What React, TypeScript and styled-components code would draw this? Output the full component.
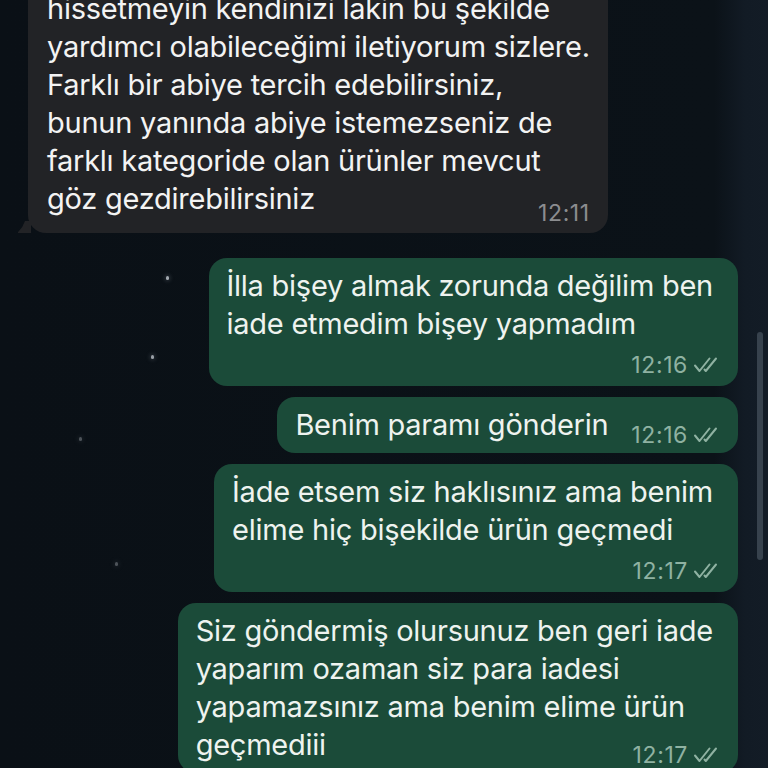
import React from 'react';
import styled, { createGlobalStyle } from 'styled-components';

const GlobalStyle = createGlobalStyle`
  html, body {
    margin: 0;
    padding: 0;
    background: #0b1117;
  }
  body {
    font-family: Inter, "Noto Sans", sans-serif;
    -webkit-font-smoothing: antialiased;
  }
`;

interface Message {
  id: number;
  out: boolean;
  time: string;
  inline: boolean;
  lines: string[];
}

const messages: Message[] = [
  {
    id: 1,
    out: false,
    time: '12:11',
    inline: true,
    lines: [
      'hissetmeyin kendinizi lakin bu şekilde',
      'yardımcı olabileceğimi iletiyorum sizlere.',
      'Farklı bir abiye tercih edebilirsiniz,',
      'bunun yanında abiye istemezseniz de',
      'farklı kategoride olan ürünler mevcut',
      'göz gezdirebilirsiniz',
    ],
  },
  {
    id: 2,
    out: true,
    time: '12:16',
    inline: false,
    lines: ['İlla bişey almak zorunda değilim ben', 'iade etmedim bişey yapmadım'],
  },
  { id: 3, out: true, time: '12:16', inline: true, lines: ['Benim paramı gönderin'] },
  {
    id: 4,
    out: true,
    time: '12:17',
    inline: false,
    lines: ['İade etsem siz haklısınız ama benim', 'elime hiç bişekilde ürün geçmedi'],
  },
  {
    id: 5,
    out: true,
    time: '12:17',
    inline: true,
    lines: [
      'Siz göndermiş olursunuz ben geri iade',
      'yaparım ozaman siz para iadesi',
      'yapamazsınız ama benim elime ürün',
      'geçmediii',
    ],
  },
];

// wallpaper specks, place on the canvas is the content
const stars = [
  { x: 166, y: 276, o: 0.8 },
  { x: 151, y: 355, o: 0.75 },
  { x: 79, y: 437, o: 0.35 },
  { x: 115, y: 562, o: 0.35 },
];

const Screen = styled.div`
  position: relative;
  width: 768px;
  height: 768px;
  overflow: hidden;
  background: linear-gradient(90deg, #0a1016 0%, #0b1218 93%, #121b25 97%, #131c26 100%);
`;

const Star = styled.span<{ $o: number }>`
  position: absolute;
  width: 3px;
  height: 4px;
  border-radius: 2px;
  background: #c9cfd6;
  opacity: ${p => p.$o};
  box-shadow: 0 0 4px 1px rgba(160, 170, 180, 0.35);
`;

const Feed = styled.div`
  display: flex;
  flex-direction: column;
  gap: 11px;
  padding: 0 30px 0 28px;
  margin-top: -19px;
`;

const Row = styled.div<{ $out: boolean; $turn: boolean }>`
  display: flex;
  justify-content: ${p => (p.$out ? 'flex-end' : 'flex-start')};
  margin-top: ${p => (p.$turn ? '14px' : '0')};
`;

const Bubble = styled.div<{ $out: boolean }>`
  position: relative;
  display: flex;
  flex-direction: column;
  padding: ${p => (p.$out ? '9px 25px 9px 18px' : '9px 18px 15px 19px')};
  border-radius: 18px;
  background: ${p => (p.$out ? '#1b4b39' : '#222326')};
  color: ${p => (p.$out ? '#eef3ef' : '#f3f3f3')};
  font-size: 29px;
  line-height: 38px;
  letter-spacing: -0.25px;
`;

const Line = styled.div`
  white-space: nowrap;
`;

const LastRow = styled.div`
  display: flex;
  align-items: flex-end;
  gap: 23px;
  white-space: nowrap;
`;

const Meta = styled.div<{ $out: boolean; $inline: boolean }>`
  display: flex;
  align-items: center;
  gap: 5px;
  height: 24px;
  margin-left: auto;
  margin-right: ${p => (p.$out ? '-7px' : '0')};
  margin-top: ${p => (p.$inline ? '0' : '10px')};
  margin-bottom: ${p => (p.$inline ? (p.$out ? '-3px' : '-7px') : '0')};
  font-size: 23px;
  line-height: 24px;
  letter-spacing: 0.6px;
  color: ${p => (p.$out ? '#8fb2a2' : '#8c8d90')};
`;

const Tail = styled.svg`
  position: absolute;
  left: -11px;
  bottom: 0;
`;

const ScrollThumb = styled.div`
  position: absolute;
  right: 5px;
  top: 332px;
  width: 6px;
  height: 228px;
  border-radius: 3px;
  background: #37424d;
`;

const Ticks = () => (
  <svg width="27" height="16" viewBox="0 0 27 16" fill="none">
    <path d="M2 8.5 L6.5 14 L16.5 1.5" stroke="currentColor" strokeWidth="2" strokeLinecap="round" strokeLinejoin="round" />
    <path d="M11.5 12.5 L12.8 14 L23 1.5" stroke="currentColor" strokeWidth="2" strokeLinecap="round" strokeLinejoin="round" />
  </svg>
);

const MetaBox = ({ m }: { m: Message }) => (
  <Meta $out={m.out} $inline={m.inline}>
    <span>{m.time}</span>
    {m.out && <Ticks />}
  </Meta>
);

const MessageBubble = ({ m }: { m: Message }) => {
  const head = m.lines.slice(0, -1);
  const last = m.lines[m.lines.length - 1];

  return (
    <Bubble $out={m.out}>
      {!m.out && (
        <Tail width="14" height="12" viewBox="0 0 14 12">
          <path d="M14 0 L14 12 L2 12 Q0 12 1.5 10.5 Q6 6 8 0 Z" fill="#222326" />
        </Tail>
      )}
      {head.map((l, i) => (
        <Line key={i}>{l}</Line>
      ))}
      {m.inline ? (
        <LastRow>
          <span>{last}</span>
          <MetaBox m={m} />
        </LastRow>
      ) : (
        <>
          <Line>{last}</Line>
          <MetaBox m={m} />
        </>
      )}
    </Bubble>
  );
};

export default function App() {
  return (
    <Screen>
      <GlobalStyle />
      {stars.map((s, i) => (
        <Star key={i} $o={s.o} style={{ left: s.x, top: s.y }} />
      ))}
      <Feed>
        {messages.map((m, i) => (
          <Row key={m.id} $out={m.out} $turn={i > 0 && messages[i - 1].out !== m.out}>
            <MessageBubble m={m} />
          </Row>
        ))}
      </Feed>
      <ScrollThumb />
    </Screen>
  );
}
